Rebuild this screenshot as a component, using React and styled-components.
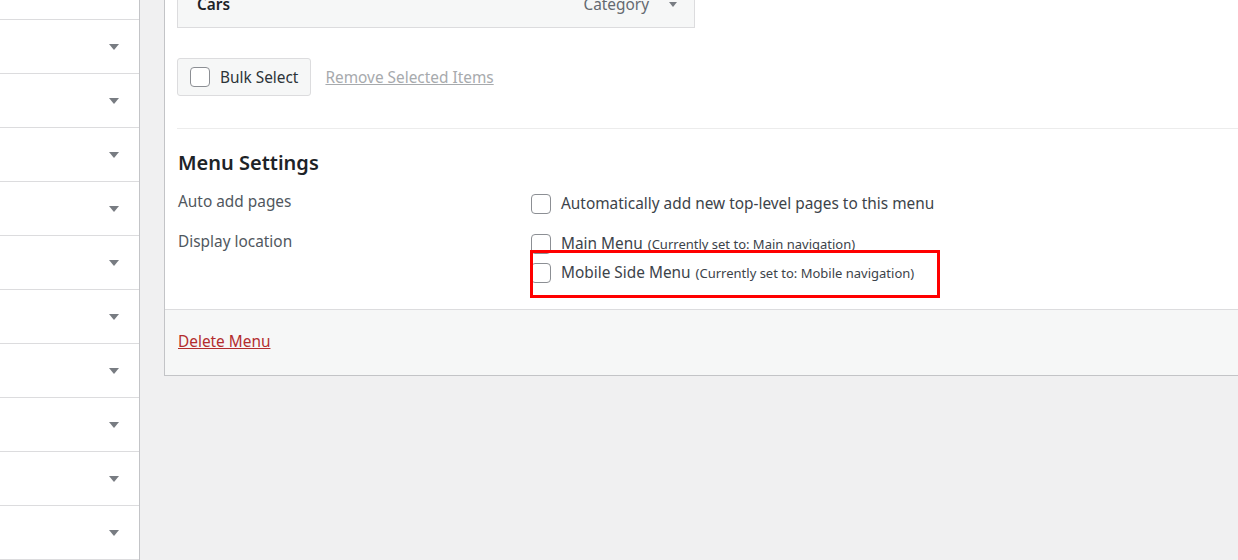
import styled, { createGlobalStyle } from "styled-components";

const GlobalStyle = createGlobalStyle`
  html, body {
    margin: 0;
    padding: 0;
    background: #f0f0f1;
    font-family: "Noto Sans", "Open Sans", sans-serif;
    color: #3c434a;
    overflow: hidden;
  }
`;

const Page = styled.div`
  display: flex;
  align-items: flex-start;
  gap: 24px;
  margin-top: -34px;
  height: 600px;
`;

const Sidebar = styled.ul`
  list-style: none;
  margin: 0;
  padding: 0;
  width: 139px;
  flex: none;
  background: #fff;
  border-right: 1px solid #c3c4c7;
  height: 100%;
`;

const SideItem = styled.li`
  height: 53px;
  border-bottom: 1px solid #dcdcde;
  display: flex;
  align-items: center;
  justify-content: flex-end;
  padding-right: 20px;
`;

const Caret = styled.span`
  width: 0;
  height: 0;
  border-left: ${(p) => p.$size || 5}px solid transparent;
  border-right: ${(p) => p.$size || 5}px solid transparent;
  border-top: ${(p) => (p.$size || 5) + 1}px solid #787c82;
`;

const Panel = styled.div`
  flex: 1;
  min-width: 1100px;
  background: #fff;
  border-left: 1px solid #c3c4c7;
  border-bottom: 1px solid #c3c4c7;
`;

const TopSection = styled.div`
  margin-left: 12px;
  padding: 14px 0 32px;
  border-bottom: 1px solid #ececec;
`;

const ItemHandle = styled.div`
  width: 480px;
  height: 46px;
  background: #f6f7f7;
  border: 1px solid #dcdcde;
  padding: 0 17px 0 19px;
  display: flex;
  align-items: center;
  justify-content: space-between;
`;

const ItemTitle = styled.span`
  font-weight: 600;
  font-size: 15.4px;
  color: #1d2327;
`;

const ItemMeta = styled.span`
  display: flex;
  align-items: center;
  gap: 20px;
  font-size: 15.4px;
  color: #646970;
`;

const BulkRow = styled.div`
  display: flex;
  align-items: center;
  gap: 14px;
  margin-top: 30px;
`;

const BulkButton = styled.label`
  display: flex;
  align-items: center;
  gap: 10px;
  height: 36px;
  padding: 0 12px;
  background: #f6f7f7;
  border: 1px solid #dcdcde;
  border-radius: 3px;
  font-size: 15.4px;
  color: #2c3338;
`;

const Box = styled.span`
  width: 18px;
  height: 18px;
  flex: none;
  border: 1px solid #8c8f94;
  border-radius: 4px;
  background: #fff;
`;

const MutedLink = styled.a`
  font-size: 15.4px;
  color: #a7aaad;
  text-decoration: underline;
`;

const Settings = styled.div`
  padding: 19px 12px 22px 13px;
`;

const Heading = styled.h3`
  margin: 0 0 13px;
  padding-top: 1px;
  height: 27px;
  font-size: 20px;
  line-height: 28px;
  font-weight: 600;
  color: #1d2327;
`;

const FieldGrid = styled.div`
  display: grid;
  grid-template-columns: 353px 1fr;
  row-gap: 11px;
`;

const FieldLabel = styled.div`
  font-size: 15.4px;
  line-height: 26px;
  color: #50575e;
`;

const Options = styled.div`
  position: relative;
  display: flex;
  flex-direction: column;
`;

const Option = styled.label`
  display: flex;
  align-items: center;
  gap: 10px;
  height: 29px;
  font-size: 15.4px;
  color: #3c434a;
`;

const Note = styled.span`
  font-size: 13px;
  margin-left: 5px;
`;

const Highlight = styled.div`
  position: absolute;
  left: -1px;
  top: 21px;
  width: 404px;
  height: 42px;
  border: 3px solid #ff0000;
  pointer-events: none;
`;

const Footer = styled.div`
  height: 66px;
  box-sizing: border-box;
  padding: 0 0 2px 13px;
  background: #f6f7f7;
  border-top: 1px solid #dcdcde;
  display: flex;
  align-items: center;
`;

const DangerLink = styled.a`
  font-size: 15.4px;
  color: #b32d2e;
  text-decoration: underline;
`;

const sideItems = Array.from({ length: 11 }, (_, i) => i);

export default function App() {
  return (
    <>
      <GlobalStyle />
      <Page>
        <Sidebar>
          {sideItems.map((i) => (
            <SideItem key={i}>{i > 0 && <Caret />}</SideItem>
          ))}
        </Sidebar>
        <Panel>
          <TopSection>
            <ItemHandle>
              <ItemTitle>Cars</ItemTitle>
              <ItemMeta>
                Category
                <Caret $size={4} />
              </ItemMeta>
            </ItemHandle>
            <BulkRow>
              <BulkButton>
                <Box />
                Bulk Select
              </BulkButton>
              <MutedLink>Remove Selected Items</MutedLink>
            </BulkRow>
          </TopSection>
          <Settings>
            <Heading>Menu Settings</Heading>
            <FieldGrid>
              <FieldLabel>Auto add pages</FieldLabel>
              <Options>
                <Option>
                  <Box />
                  Automatically add new top-level pages to this menu
                </Option>
              </Options>
              <FieldLabel>Display location</FieldLabel>
              <Options>
                <Option>
                  <Box />
                  <span>
                    Main Menu<Note>(Currently set to: Main navigation)</Note>
                  </span>
                </Option>
                <Option>
                  <Box />
                  <span>
                    Mobile Side Menu
                    <Note>(Currently set to: Mobile navigation)</Note>
                  </span>
                </Option>
                <Highlight />
              </Options>
            </FieldGrid>
          </Settings>
          <Footer>
            <DangerLink>Delete Menu</DangerLink>
          </Footer>
        </Panel>
      </Page>
    </>
  );
}
